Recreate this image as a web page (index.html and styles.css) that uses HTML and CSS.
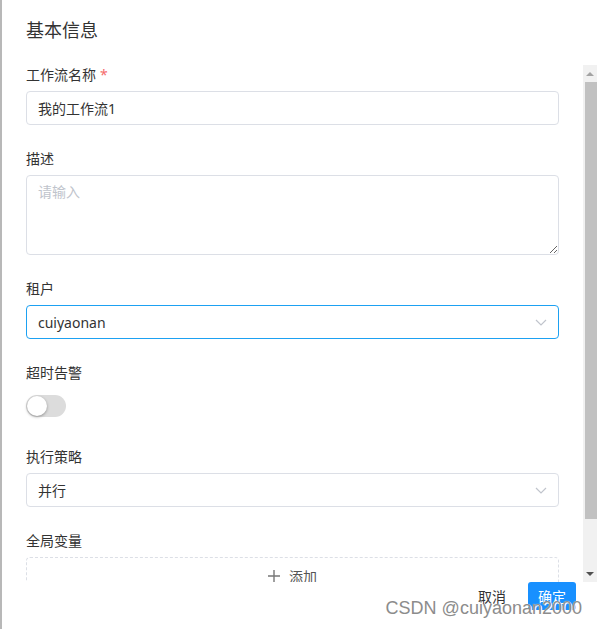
FILE: index.html
```html
<!DOCTYPE html>
<html lang="zh-CN">
<head>
  <meta charset="UTF-8">
  <meta name="viewport" content="width=device-width, initial-scale=1.0">
  <title>基本信息</title>
  <link rel="stylesheet" href="styles.css">
</head>
<body>
  <div class="dialog">
    <div class="dialog-header">
      <h2 class="dialog-title">基本信息</h2>
    </div>

    <div class="dialog-body">
      <form class="form">
        <div class="form-item">
          <label class="form-label" for="name">工作流名称<span class="required">*</span></label>
          <input class="form-input" type="text" id="name" value="我的工作流1">
        </div>

        <div class="form-item">
          <label class="form-label" for="desc">描述</label>
          <textarea class="form-textarea" id="desc" placeholder="请输入"></textarea>
        </div>

        <div class="form-item">
          <label class="form-label">租户</label>
          <div class="form-select is-focus">
            <span>cuiyaonan</span>
            <svg class="select-arrow" width="12" height="7" viewBox="0 0 12 7"><path d="M1 1l5 5 5-5" fill="none" stroke="#c0c4cc" stroke-width="1.2"/></svg>
          </div>
        </div>

        <div class="form-item">
          <label class="form-label">超时告警</label>
          <div class="switch-wrap">
            <span class="switch"><span class="switch-knob"></span></span>
          </div>
        </div>

        <div class="form-item">
          <label class="form-label">执行策略</label>
          <div class="form-select">
            <span>并行</span>
            <svg class="select-arrow" width="12" height="7" viewBox="0 0 12 7"><path d="M1 1l5 5 5-5" fill="none" stroke="#c0c4cc" stroke-width="1.2"/></svg>
          </div>
        </div>

        <div class="form-item">
          <label class="form-label">全局变量</label>
          <div class="add-box">
            <svg width="12" height="12" viewBox="0 0 12 12"><path d="M6 0v12M0 6h12" stroke="#777" stroke-width="1.4"/></svg>
            <span>添加</span>
          </div>
        </div>
      </form>

      <div class="scrollbar">
        <div class="scrollbar-btn"><span class="arrow-up"></span></div>
        <div class="scrollbar-thumb"></div>
        <div class="scrollbar-track"></div>
        <div class="scrollbar-btn"><span class="arrow-down"></span></div>
      </div>
    </div>

    <div class="dialog-footer">
      <button class="btn btn-text" type="button">取消</button>
      <button class="btn btn-primary" type="button">确定</button>
    </div>

    <div class="watermark">CSDN @cuiyaonan2000</div>
  </div>
</body>
</html>
```

FILE: styles.css
```css
body {
  margin: 0;
  padding: 0;
  background-color: #ffffff;
  font-family: "Noto Sans", "Noto Sans CJK SC", sans-serif;
  color: #333333;
}

.dialog {
  position: relative;
  width: 597px;
  height: 629px;
  border-left: 2px solid #b8b8b8;
  box-sizing: border-box;
  overflow: hidden;
}

.dialog-header {
  height: 65px;
  padding: 18px 24px 0;
  box-sizing: border-box;
}

.dialog-title {
  margin: 0;
  font-size: 18px;
  line-height: 24px;
  font-weight: normal;
  color: #333333;
}

.dialog-body {
  display: flex;
  height: 517px;
}

.form {
  flex: 1;
  padding: 0 24px;
  overflow: hidden;
}

.form-item {
  margin-bottom: 24px;
}

.form-label {
  display: block;
  font-size: 14px;
  line-height: 20px;
  margin-bottom: 6px;
  color: #333333;
}

.required {
  color: #f56c6c;
  margin-left: 4px;
}

.form-input,
.form-select,
.form-textarea {
  display: block;
  width: 100%;
  box-sizing: border-box;
  border: 1px solid #dcdfe6;
  border-radius: 4px;
  font-family: inherit;
  font-size: 14px;
  color: #333333;
  background-color: #ffffff;
}

.form-input {
  height: 34px;
  padding: 0 11px;
  outline: none;
}

.form-textarea {
  height: 80px;
  padding: 5px 11px;
  line-height: 22px;
  resize: vertical;
  outline: none;
}

.form-textarea::placeholder {
  color: #c0c4cc;
}

.form-select {
  height: 34px;
  padding: 0 11px;
  display: flex;
  align-items: center;
  justify-content: space-between;
}

.form-select.is-focus {
  border-color: #1da1f2;
}

.switch-wrap {
  height: 34px;
  display: flex;
  align-items: center;
}

.switch {
  position: relative;
  width: 40px;
  height: 22px;
  border-radius: 11px;
  background-color: #dcdcdc;
}

.switch-knob {
  position: absolute;
  top: 1px;
  left: 1px;
  width: 20px;
  height: 20px;
  border-radius: 50%;
  background-color: #ffffff;
  box-shadow: 0 1px 3px rgba(0, 0, 0, 0.35);
}

.add-box {
  height: 36px;
  border: 1px dashed #dcdfe6;
  border-radius: 4px;
  display: flex;
  align-items: center;
  justify-content: center;
  gap: 9px;
  font-size: 14px;
  color: #555555;
}

.scrollbar {
  width: 14px;
  display: flex;
  flex-direction: column;
  background-color: #f1f1f1;
}

.scrollbar-btn {
  height: 17px;
  display: flex;
  align-items: center;
  justify-content: center;
}

.arrow-up {
  border-left: 4px solid transparent;
  border-right: 4px solid transparent;
  border-bottom: 4px solid #a3a3a3;
}

.arrow-down {
  border-left: 4px solid transparent;
  border-right: 4px solid transparent;
  border-top: 4px solid #505050;
}

.scrollbar-thumb {
  height: 437px;
  margin-left: 2px;
  background-color: #c1c1c1;
}

.scrollbar-track {
  flex: 1;
}

.dialog-footer {
  display: flex;
  justify-content: flex-end;
  gap: 12px;
  padding-right: 21px;
}

.btn {
  height: 28px;
  padding: 0 10px;
  border: none;
  border-radius: 3px;
  font-family: inherit;
  font-size: 14px;
  cursor: pointer;
}

.btn-text {
  background: none;
  color: #333333;
}

.btn-primary {
  background-color: #1890ff;
  color: #ffffff;
}

.watermark {
  position: absolute;
  top: 597px;
  right: 15px;
  font-family: "Liberation Sans", sans-serif;
  font-size: 18px;
  line-height: 22px;
  color: #8c8c8c;
  text-shadow: 0 0 1px #ffffff, 1px 1px 0 #ffffff;
}
```
